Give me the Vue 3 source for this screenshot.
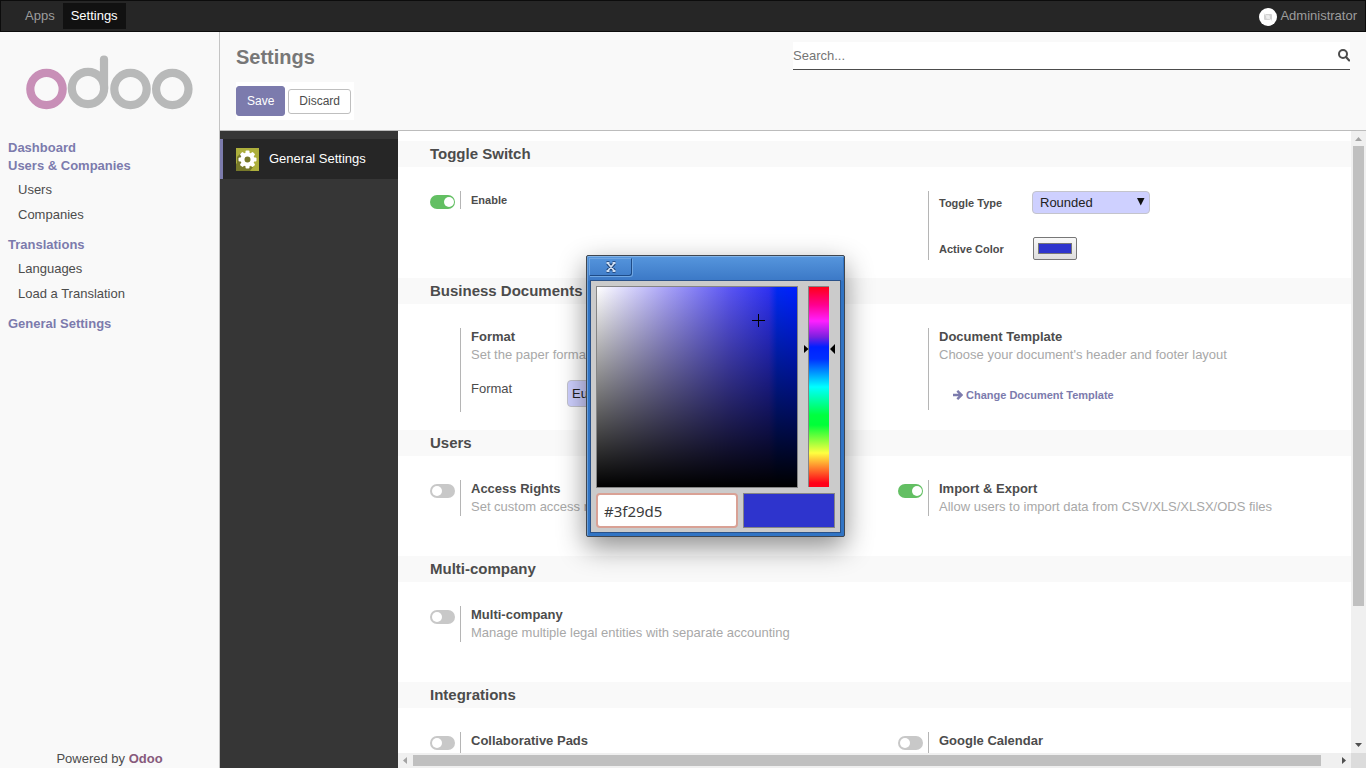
<script setup>
import { ref } from 'vue'

const color = ref('#2e34cd')
const hex = ref('#3f29d5')
const hue = ref(69)
const toggleType = ref('Rounded')
const paper = ref('European A4')
const search = ref('')
const enable = ref(true)
const access = ref(false)
const importExport = ref(true)
const multi = ref(false)
const pads = ref(false)
const calendar = ref(false)

const menu = [
  { title: 'Dashboard', items: [] },
  { title: 'Users & Companies', items: ['Users', 'Companies'] },
  { title: 'Translations', items: ['Languages', 'Load a Translation'] },
  { title: 'General Settings', items: [] },
]
const teeth = [0, 45, 90, 135, 180, 225, 270, 315]
</script>

<template>
  <div class="page">
    <nav class="topbar">
      <a href="#" class="app">Apps</a>
      <a href="#" class="app active">Settings</a>
      <a href="#" class="user">
        <svg width="18" height="18" viewBox="0 0 18 18" aria-hidden="true">
          <circle cx="9" cy="9" r="9" fill="#fff" />
          <rect x="5" y="6" width="8" height="6" rx="1" fill="#d2d2d2" />
          <circle cx="9" cy="9" r="2" fill="#eee" />
          <path d="M4.500 5 L13.500 13.500" stroke="#eee" />
        </svg>
        <span>Administrator</span>
      </a>
    </nav>

    <div class="body">
      <aside class="sidebar">
        <svg class="logo" width="168" height="56" viewBox="0 0 168 56" role="img" aria-label="odoo">
          <g fill="none" stroke-width="8.200">
            <circle cx="20.500" cy="34" r="16.200" stroke="#c88fb7" />
            <g stroke="#b8b9b9">
              <circle cx="62" cy="33" r="16.200" />
              <path d="M78 33V4.500" stroke-linecap="round" />
              <circle cx="104.500" cy="34" r="16.200" />
              <circle cx="146.300" cy="34" r="16.200" />
            </g>
          </g>
        </svg>
        <div class="menu">
          <div v-for="g in menu" :key="g.title" class="group">
            <a href="#" class="heading">{{ g.title }}</a>
            <div v-if="g.items.length" class="items">
              <a v-for="i in g.items" :key="i" href="#">{{ i }}</a>
            </div>
          </div>
        </div>
        <footer>Powered by <a href="#">Odoo</a></footer>
      </aside>

      <div class="content">
        <header class="panel">
          <div class="panel-left">
            <h1>Settings</h1>
            <div class="buttons">
              <button class="save">Save</button>
              <button class="discard">Discard</button>
            </div>
          </div>
          <div class="search">
            <input v-model="search" type="text" placeholder="Search..." aria-label="Search" />
            <svg width="12" height="13" viewBox="0 0 12 13" aria-hidden="true">
              <circle cx="5" cy="5" r="4" fill="none" stroke="#4c4c4c" stroke-width="2" />
              <path d="M8 8L11.200 11.400" stroke="#4c4c4c" stroke-width="2.200" stroke-linecap="round" />
            </svg>
          </div>
        </header>

        <div class="workspace">
          <div class="tabs">
            <a href="#" class="tab">
              <svg width="23" height="23" viewBox="0 0 23 23" aria-hidden="true">
                <rect width="23" height="23" fill="#adaf3c" />
                <path d="M5 17L2 14L0 16V23H14L17 19Z M5 5L1 9V16L8 19Z" fill="#77792a" />
                <g fill="#fff">
                  <rect v-for="t in teeth" :key="t" x="9.500" y="2.500" width="4" height="5" rx="1" :transform="`rotate(${t} 11.500 11.500)`" />
                </g>
                <circle cx="11.500" cy="11.500" r="5" fill="#77792a" stroke="#fff" stroke-width="4" />
              </svg>
              <span>General Settings</span>
            </a>
          </div>

          <div class="scroller">
            <main class="settings">
              <h2>Toggle Switch</h2>
              <div class="row">
                <div class="box">
                  <div class="switch"><input id="enable" v-model="enable" type="checkbox" /></div>
                  <div class="info"><label for="enable" class="small">Enable</label></div>
                </div>
                <div class="box">
                  <div class="switch"></div>
                  <div class="info fields">
                    <label for="type" class="small">Toggle Type</label>
                    <span class="select">
                      <select id="type" v-model="toggleType"><option>Rounded</option><option>Square</option></select>
                      <svg width="8" height="8" viewBox="0 0 8 8" aria-hidden="true"><path d="M0 0H7.500L3.750 7.500Z" fill="#111" /></svg>
                    </span>
                    <label for="color" class="small">Active Color</label>
                    <input id="color" v-model="color" type="color" />
                  </div>
                </div>
              </div>

              <h2>Business Documents</h2>
              <div class="row">
                <div class="box">
                  <div class="switch"></div>
                  <div class="info">
                    <b>Format</b>
                    <p>Set the paper format of printed documents</p>
                    <div class="format">
                      <label for="paper">Format</label>
                      <select id="paper" v-model="paper"><option>European A4</option><option>US Letter</option></select>
                    </div>
                  </div>
                </div>
                <div class="box">
                  <div class="switch"></div>
                  <div class="info">
                    <b>Document Template</b>
                    <p>Choose your document's header and footer layout</p>
                    <button class="link">
                      <svg width="10" height="10" viewBox="0 0 10 10" aria-hidden="true">
                        <path d="M0 5H8M4.300 0.800L8.500 5L4.300 9.200" fill="none" stroke="#7c7bad" stroke-width="2.400" />
                      </svg>
                      Change Document Template
                    </button>
                  </div>
                </div>
              </div>

              <h2>Users</h2>
              <div class="row">
                <div class="box">
                  <div class="switch"><input id="access" v-model="access" type="checkbox" /></div>
                  <div class="info">
                    <label for="access">Access Rights</label>
                    <p>Set custom access rights</p>
                  </div>
                </div>
                <div class="box">
                  <div class="switch"><input id="import" v-model="importExport" type="checkbox" /></div>
                  <div class="info">
                    <label for="import">Import &amp; Export</label>
                    <p>Allow users to import data from CSV/XLS/XLSX/ODS files</p>
                  </div>
                </div>
              </div>

              <h2>Multi-company</h2>
              <div class="row">
                <div class="box">
                  <div class="switch"><input id="multi" v-model="multi" type="checkbox" /></div>
                  <div class="info">
                    <label for="multi">Multi-company</label>
                    <p>Manage multiple legal entities with separate accounting</p>
                  </div>
                </div>
              </div>

              <h2>Integrations</h2>
              <div class="row">
                <div class="box">
                  <div class="switch"><input id="pads" v-model="pads" type="checkbox" /></div>
                  <div class="info tall"><label for="pads">Collaborative Pads</label></div>
                </div>
                <div class="box">
                  <div class="switch"><input id="calendar" v-model="calendar" type="checkbox" /></div>
                  <div class="info tall"><label for="calendar">Google Calendar</label></div>
                </div>
              </div>
            </main>

            <div class="bar vertical">
              <svg width="15" height="15" viewBox="0 0 15 15"><path d="M4 10L7.500 6L11 10Z" fill="#a3a3a3" /></svg>
              <div class="track"><div class="thumb"></div></div>
              <svg width="15" height="15" viewBox="0 0 15 15"><path d="M4 5L7.500 9L11 5Z" fill="#505050" /></svg>
            </div>
            <div class="bar horizontal">
              <svg width="15" height="15" viewBox="0 0 15 15"><path d="M9 4L5 7.500L9 11Z" fill="#a3a3a3" /></svg>
              <div class="track"><div class="thumb"></div></div>
              <svg width="15" height="15" viewBox="0 0 15 15"><path d="M6 4L10 7.500L6 11Z" fill="#505050" /></svg>
            </div>
            <div class="corner"></div>
          </div>
        </div>
      </div>
    </div>

    <section class="picker" role="dialog" aria-label="Color picker">
      <div class="titlebar">
        <button aria-label="Close">
          <svg width="12" height="12" viewBox="0 0 12 12" aria-hidden="true">
            <path d="M3 2.500L9 9.500M9 2.500L3 9.500M1.500 2H4.500M7.500 2H10.500M1.500 10H4.500M7.500 10H10.500" fill="none" stroke="#1d3f70" stroke-width="3.600" />
            <path d="M3 2.500L9 9.500M9 2.500L3 9.500M1.500 2H4.500M7.500 2H10.500M1.500 10H4.500M7.500 10H10.500" fill="none" stroke="#cfe0f5" stroke-width="1.800" />
          </svg>
        </button>
      </div>
      <div class="picker-body">
        <div class="shade">
          <svg class="cross" width="13" height="13" viewBox="0 0 13 13"><path d="M0 6.500H13M6.500 0V13" stroke="#000" /></svg>
        </div>
        <div class="hue">
          <input v-model="hue" type="range" min="0" max="100" aria-label="Hue" />
          <svg class="arrows" width="32" height="10" viewBox="0 0 32 10"><path d="M0 1V9L4.500 5ZM31 0V10L26 5Z" fill="#000" /></svg>
        </div>
        <div class="result">
          <input v-model="hex" type="text" aria-label="Hex color" />
          <div class="preview"></div>
        </div>
      </div>
    </section>
  </div>
</template>

<style>
body {
  margin: 0;
}
</style>

<style scoped>
* {
  box-sizing: border-box;
}
.page {
  position: relative;
  display: flex;
  flex-direction: column;
  height: 100vh;
  overflow: hidden;
  font: 13px/18px "Liberation Sans", Arial, sans-serif;
  color: #4c4c4c;
  background: #fff;
}
a {
  text-decoration: none;
  color: inherit;
}
input,
select,
button {
  font: inherit;
  margin: 0;
}
svg {
  display: block;
  flex: none;
}
.topbar {
  display: flex;
  flex: none;
  height: 32px;
  padding: 2px 8px 2px 14px;
  border: 1px solid #0c0c0c;
  background: #262626;
  color: #9d9d9d;
}
.app {
  padding: 4px 8px 4px 10px;
}
.app.active {
  background: #111;
  color: #fff;
  padding: 4px 8px;
}
.user {
  display: flex;
  gap: 3px;
  margin-left: auto;
  padding-top: 4px;
}
.user svg {
  margin-top: 1px;
}
.body {
  display: flex;
  flex: 1;
  min-height: 0;
}
.sidebar {
  display: flex;
  flex-direction: column;
  flex: none;
  width: 220px;
  border-right: 1px solid #c4c4c4;
  background: #f9f9f9;
}
.logo {
  margin: 23px 26px 28px;
}
.menu {
  padding-left: 8px;
}
.heading {
  display: block;
  font-weight: bold;
  color: #7c7bad;
}
.items {
  display: flex;
  flex-direction: column;
  padding: 2px 0 9px 10px;
  line-height: 25px;
}
footer {
  margin-top: auto;
  text-align: center;
}
footer a {
  font-weight: bold;
  color: #875a7b;
}
.content {
  display: flex;
  flex-direction: column;
  flex: 1;
  min-width: 0;
}
.panel {
  display: flex;
  justify-content: space-between;
  flex: none;
  height: 99px;
  padding: 10px 16px;
  border-bottom: 1px solid #bcbcbc;
  background: #f9f9f9;
}
h1 {
  margin: 3px 0 13px;
  font-size: 20px;
  line-height: 24px;
  color: #777;
}
.buttons {
  display: flex;
  align-items: center;
  gap: 3px;
  padding: 4px 3px 4px 0;
  background: #fff;
}
.buttons button {
  font-size: 12px;
  border-radius: 3px;
  padding: 0 10px;
}
.save {
  height: 30px;
  border: 1px solid #7c7bad;
  background: #7c7bad;
  color: #fff;
}
.discard {
  height: 25px;
  border: 1px solid #bfbfbf;
  background: #fff;
  color: #4c4c4c;
}
.search {
  display: flex;
  width: 50%;
  max-width: 557px;
  height: 28px;
  border-bottom: 1px solid #4c4c4c;
  background: #fff;
}
.search input {
  flex: 1;
  min-width: 0;
  padding: 0;
  border: 0;
  outline: 0;
  background: none;
  color: #4c4c4c;
}
.search input::placeholder {
  color: #757575;
}
.search svg {
  margin-top: 7px;
}
.workspace {
  display: flex;
  flex: 1;
  min-height: 0;
}
.tabs {
  flex: none;
  width: 178px;
  padding-top: 8px;
  background: #363636;
}
.tab {
  display: flex;
  align-items: center;
  gap: 10px;
  height: 40px;
  padding-left: 13px;
  border-left: 3px solid #7c7bad;
  background: #262626;
  color: #fff;
}
.scroller {
  display: grid;
  grid-template: minmax(0, 1fr) 15px / minmax(0, 1fr) 15px;
  flex: 1;
  min-width: 0;
}
.settings {
  padding-top: 10px;
  overflow: hidden;
}
h2 {
  margin: 0;
  padding-left: 32px;
  font-size: 15px;
  line-height: 26px;
  background: #f9f9f9;
}
.row {
  display: grid;
  grid-template-columns: 1fr 1fr;
  align-items: start;
  min-height: 100px;
  padding: 24px 1px 18px 16px;
}
.box {
  display: flex;
  padding-left: 16px;
}
.switch {
  flex: none;
  width: 30px;
  padding-top: 4px;
}
.switch input {
  display: flex;
  align-items: center;
  appearance: none;
  width: 25px;
  height: 14px;
  padding: 0 2px;
  border-radius: 7px;
  background: #c8c8c8;
}
.switch input::before {
  content: "";
  width: 10px;
  height: 10px;
  border-radius: 50%;
  background: #fff;
}
.switch input:checked {
  justify-content: flex-end;
  padding: 0 1px;
  background: #63bf63;
}
.info {
  border-left: 1px solid #b5b5b5;
  padding-left: 10px;
}
.info > b,
.info > label {
  display: block;
  font-weight: bold;
}
.info > .small {
  font-size: 11px;
}
.info p {
  margin: 0;
  color: #a8a8a8;
}
.tall {
  min-height: 60px;
}
.fields {
  display: grid;
  grid-template-columns: 93px 118px;
  align-items: center;
  row-gap: 23px;
}
.select {
  display: block;
  position: relative;
}
.select svg {
  position: absolute;
  right: 5px;
  top: 7px;
  pointer-events: none;
}
select {
  display: block;
  appearance: none;
  width: 100%;
  height: 23px;
  padding: 0 7px;
  border: 1px solid #c4c4cc;
  border-radius: 4px;
  background: #ced0ff;
  color: #222;
}
input[type="color"] {
  appearance: none;
  width: 44px;
  height: 23px;
  margin-left: 1px;
  padding: 0;
  border: 1px solid #777;
  border-radius: 2px;
  background: linear-gradient(#f8f8f8, #dedede);
}
input[type="color"]::-webkit-color-swatch-wrapper {
  padding: 5px 4px;
}
input[type="color"]::-webkit-color-swatch {
  border: 1px solid #777;
  border-radius: 0;
}
.format {
  display: grid;
  grid-template-columns: 96px 160px;
  padding: 16px 0 5px;
}
.format select {
  height: 27px;
  padding: 0 4px;
}
.link {
  display: flex;
  align-items: center;
  gap: 3px;
  height: 30px;
  margin: 16px 0 0 14px;
  padding: 0;
  border: 0;
  background: none;
  font-size: 11px;
  font-weight: bold;
  color: #7c7bad;
}
.bar {
  display: flex;
  background: #f0f0f0;
}
.vertical {
  flex-direction: column;
}
.track {
  flex: 1;
  padding: 0 2px;
}
.horizontal .track {
  padding: 2px 0;
}
.thumb {
  height: 77.7%;
  background: #c0c0c0;
}
.horizontal .thumb {
  width: 98.4%;
  height: 100%;
}
.corner {
  background: #dcdcdc;
}
.picker {
  position: absolute;
  left: 586px;
  top: 255px;
  width: 259px;
  padding: 0 4px 4px;
  border: 1px solid #3f4650;
  border-radius: 2px;
  background: #3174c4;
  box-shadow: inset 0 1px #82b4e8, inset 1px 0 #6b9fd8, 0 10px 28px rgba(0, 0, 0, 0.45);
}
.titlebar {
  height: 25px;
  margin: 0 -3px;
  padding: 2px 1px 0;
  background: linear-gradient(#5696dd, #3b78c6);
  box-shadow: inset 0 1px #82b4e8;
}
.titlebar button {
  display: flex;
  align-items: center;
  justify-content: center;
  width: 43px;
  height: 18px;
  padding: 0;
  border: 1px solid #71a7e2;
  border-right-color: #1e4b87;
  border-bottom-color: #1e4b87;
  border-radius: 0 0 3px;
  background: none;
  box-shadow: 1px 1px #71a7e2;
}
.picker-body {
  display: grid;
  grid-template-columns: 202px 21px;
  gap: 5px 10px;
  padding: 5px 5px 4px;
  background: #cbcbcb;
  box-shadow: 0 0 0 1px #2a5289;
}
.shade {
  position: relative;
  height: 202px;
  border: 1px solid #858585;
  background: linear-gradient(transparent, #000), linear-gradient(to right, #fff, #aaa4f8 34%, #5b56f4 66%, #2f32f2 86%, #0029f4 90%, #001fff);
}
.cross {
  position: absolute;
  left: 155px;
  top: 27px;
}
.hue {
  position: relative;
}
.hue input {
  display: block;
  appearance: none;
  writing-mode: vertical-lr;
  width: 21px;
  height: 201px;
  border: solid #858585;
  border-width: 1px 0 0 1px;
  background: linear-gradient(#ff0018, #ff0090 9%, #ff20ff 17%, #7a20e0 25%, #0020ff 30%, #0030ff 36%, #00ffff 50%, #00ff40 64%, #00ff38 69%, #ffff40 83%, #ff0018 98%);
}
.hue input::-webkit-slider-thumb {
  appearance: none;
  width: 20px;
  height: 1px;
}
.arrows {
  position: absolute;
  left: -4px;
  top: 58px;
  pointer-events: none;
}
.result {
  display: grid;
  grid-template-columns: 142px 92px;
  gap: 5px;
  grid-column: 1 / -1;
  width: 239px;
  height: 35px;
}
.result input {
  width: 100%;
  height: 35px;
  padding: 0 6px;
  border: 2px solid #d9a195;
  border-radius: 4px;
  outline: 0;
  background: #fff;
  font: 15px/20px "Noto Sans", sans-serif;
  color: #3c3c3c;
}
.preview {
  border: 1px solid #858585;
  background: #2e34cd;
}
</style>
